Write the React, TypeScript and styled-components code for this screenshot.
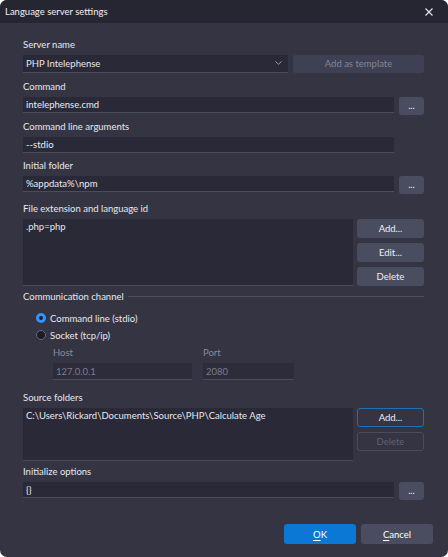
import React from 'react';
import styled, { createGlobalStyle } from 'styled-components';

const GlobalStyle = createGlobalStyle`
  html, body {
    margin: 0;
    background: #ffffff;
  }
  body {
    font-family: Lato, "Noto Sans", sans-serif;
    font-size: 9.5px;
    color: #e8e8ee;
  }
`;

const Window = styled.div`
  width: 448px;
  height: 557px;
  background: #343443;
  border-radius: 7px;
  overflow: hidden;
  display: flex;
  flex-direction: column;
`;

const TitleBar = styled.div`
  flex: none;
  height: 23px;
  background: #262633;
  display: flex;
  align-items: center;
  justify-content: space-between;
  padding: 0 15px 0 5px;
`;

const Title = styled.span`
  color: #f0f0f4;
`;

const Content = styled.div`
  flex: 1;
  display: flex;
  flex-direction: column;
  padding: 16px 24px 0 23px;
`;

const Field = styled.div<{ $mt?: number; $indent?: number }>`
  display: flex;
  flex-direction: column;
  margin-top: ${(p) => p.$mt ?? 0}px;
  margin-left: ${(p) => p.$indent ?? 0}px;
`;

const Label = styled.div<{ $dim?: boolean }>`
  height: 12px;
  line-height: 12px;
  margin-bottom: 4px;
  white-space: nowrap;
  color: ${(p) => (p.$dim ? '#8a8a98' : '#e8e8ee')};
`;

const Row = styled.div<{ $gap?: number }>`
  display: flex;
  align-items: flex-start;
  gap: ${(p) => p.$gap ?? 5}px;
`;

const Spacer = styled.div`
  flex: none;
  width: 25px;
`;

const TextInput = styled.input<{ $w?: number; $h?: number }>`
  box-sizing: border-box;
  width: ${(p) => (p.$w ? `${p.$w}px` : 'auto')};
  flex: ${(p) => (p.$w ? 'none' : '1')};
  min-width: 0;
  height: ${(p) => p.$h ?? 16}px;
  margin: 0;
  padding: 0 3px;
  border: none;
  border-bottom: 1px solid #4c4c5e;
  background: #292937;
  color: #ececf2;
  font: inherit;
  outline: none;

  &:disabled {
    color: #7c7c8a;
    background: #2c2c3a;
  }
`;

const Combo = styled.div`
  position: relative;
  box-sizing: border-box;
  width: 265px;
  height: 18px;
  padding: 0 3px;
  background: #292937;
  border-bottom: 1px solid #4c4c5e;
  display: flex;
  align-items: center;
`;

const Chevron = styled.svg`
  position: absolute;
  right: 6px;
  top: 6px;
`;

const Button = styled.button<{ $w?: number; $h?: number; $focus?: boolean }>`
  box-sizing: border-box;
  flex: none;
  width: ${(p) => p.$w ?? 25}px;
  height: ${(p) => p.$h ?? 18}px;
  margin: 0;
  padding: 0;
  border-radius: 3px;
  border: 1px solid ${(p) => (p.$focus ? '#1d6fb8' : 'transparent')};
  background: ${(p) => (p.$focus ? '#343443' : '#4a4c5f')};
  color: #eeeef4;
  font: inherit;
  line-height: 1;

  &:disabled {
    color: #858595;
    background: #3e4053;
  }
`;

const GhostButton = styled(Button)`
  &:disabled {
    background: transparent;
    border-color: #4a4c5e;
    color: #5f6173;
  }
`;

const ButtonStack = styled.div`
  display: flex;
  flex-direction: column;
  gap: 5px;
`;

const ListBox = styled.div<{ $h: number }>`
  box-sizing: border-box;
  width: 330px;
  height: ${(p) => p.$h}px;
  padding: 2px 3px;
  background: #292937;
  border-bottom: 1px solid #4c4c5e;
  line-height: 12px;
  white-space: nowrap;
`;

const GroupHeader = styled.div<{ $mt?: number }>`
  display: flex;
  align-items: center;
  gap: 4px;
  height: 12px;
  margin-top: ${(p) => p.$mt ?? 0}px;
  white-space: nowrap;

  &::after {
    content: '';
    flex: 1;
    height: 1px;
    background: #50505f;
  }
`;

const RadioRow = styled.label<{ $mt?: number }>`
  display: flex;
  align-items: center;
  gap: 4px;
  height: 12px;
  margin: ${(p) => p.$mt ?? 0}px 0 0 13px;
`;

const RadioDot = styled.span<{ $on?: boolean }>`
  box-sizing: border-box;
  width: 10px;
  height: 10px;
  border-radius: 50%;
  background: #1d1d29;
  border: ${(p) => (p.$on ? '3px solid #2f95ff' : '1px solid #686878')};
`;

const Footer = styled.div`
  margin-top: auto;
  display: flex;
  justify-content: flex-end;
  gap: 5px;
  padding: 0 15px 13px 0;
`;

const DialogButton = styled.button<{ $primary?: boolean }>`
  box-sizing: border-box;
  width: 72px;
  height: 20px;
  margin: 0;
  border: none;
  border-radius: 3px;
  background: ${(p) => (p.$primary ? '#0b78d6' : '#4a4c5f')};
  color: #ffffff;
  font: inherit;

  u {
    text-decoration-thickness: 1px;
    text-underline-offset: 1.5px;
  }
`;

function CloseIcon() {
  return (
    <svg width="8" height="8" viewBox="0 0 8 8">
      <path d="M0.5 0.5 L7.5 7.5 M7.5 0.5 L0.5 7.5" stroke="#e6e6ec" strokeWidth="1.1" />
    </svg>
  );
}

export default function App() {
  return (
    <>
      <GlobalStyle />
      <Window>
        <TitleBar>
          <Title>Language server settings</Title>
          <CloseIcon />
        </TitleBar>

        <Content>
          <Field>
            <Label>Server name</Label>
            <Row>
              <Combo>
                PHP Intelephense
                <Chevron width="7" height="4" viewBox="0 0 7 4">
                  <path d="M0.5 0.5 L3.5 3.2 L6.5 0.5" fill="none" stroke="#9a9aa8" strokeWidth="1" />
                </Chevron>
              </Combo>
              <Button $w={131} disabled>
                Add as template
              </Button>
            </Row>
          </Field>

          <Field $mt={8}>
            <Label>Command</Label>
            <Row>
              <TextInput readOnly defaultValue="intelephense.cmd" />
              <Button>...</Button>
            </Row>
          </Field>

          <Field $mt={6}>
            <Label>Command line arguments</Label>
            <Row>
              <TextInput readOnly defaultValue="--stdio" />
              <Spacer />
            </Row>
          </Field>

          <Field $mt={7}>
            <Label>Initial folder</Label>
            <Row>
              <TextInput readOnly defaultValue="%appdata%\npm" />
              <Button>...</Button>
            </Row>
          </Field>

          <Field $mt={9}>
            <Label>File extension and language id</Label>
            <Row $gap={4}>
              <ListBox $h={67}>.php=php</ListBox>
              <ButtonStack>
                <Button $w={67} $h={19}>Add...</Button>
                <Button $w={67} $h={19}>Edit...</Button>
                <Button $w={67} $h={19}>Delete</Button>
              </ButtonStack>
            </Row>
          </Field>

          <GroupHeader $mt={4}>Communication channel</GroupHeader>
          <RadioRow $mt={10}>
            <RadioDot $on />
            Command line (stdio)
          </RadioRow>
          <RadioRow $mt={5}>
            <RadioDot />
            Socket (tcp/ip)
          </RadioRow>

          <Row $gap={11}>
            <Field $mt={6} $indent={30}>
              <Label $dim>Host</Label>
              <TextInput $w={139} $h={17} disabled defaultValue="127.0.0.1" />
            </Field>
            <Field $mt={6}>
              <Label $dim>Port</Label>
              <TextInput $w={91} $h={17} disabled defaultValue="2080" />
            </Field>
          </Row>

          <Field $mt={12}>
            <Label>Source folders</Label>
            <Row $gap={4}>
              <ListBox $h={53}>C:\Users\Rickard\Documents\Source\PHP\Calculate Age</ListBox>
              <ButtonStack>
                <Button $w={67} $h={19} $focus>Add...</Button>
                <GhostButton $w={67} $h={19} disabled>Delete</GhostButton>
              </ButtonStack>
            </Row>
          </Field>

          <Field $mt={5}>
            <Label>Initialize options</Label>
            <Row>
              <TextInput readOnly defaultValue="{}" />
              <Button>...</Button>
            </Row>
          </Field>
        </Content>

        <Footer>
          <DialogButton $primary>
            <u>O</u>K
          </DialogButton>
          <DialogButton>
            <u>C</u>ancel
          </DialogButton>
        </Footer>
      </Window>
    </>
  );
}
